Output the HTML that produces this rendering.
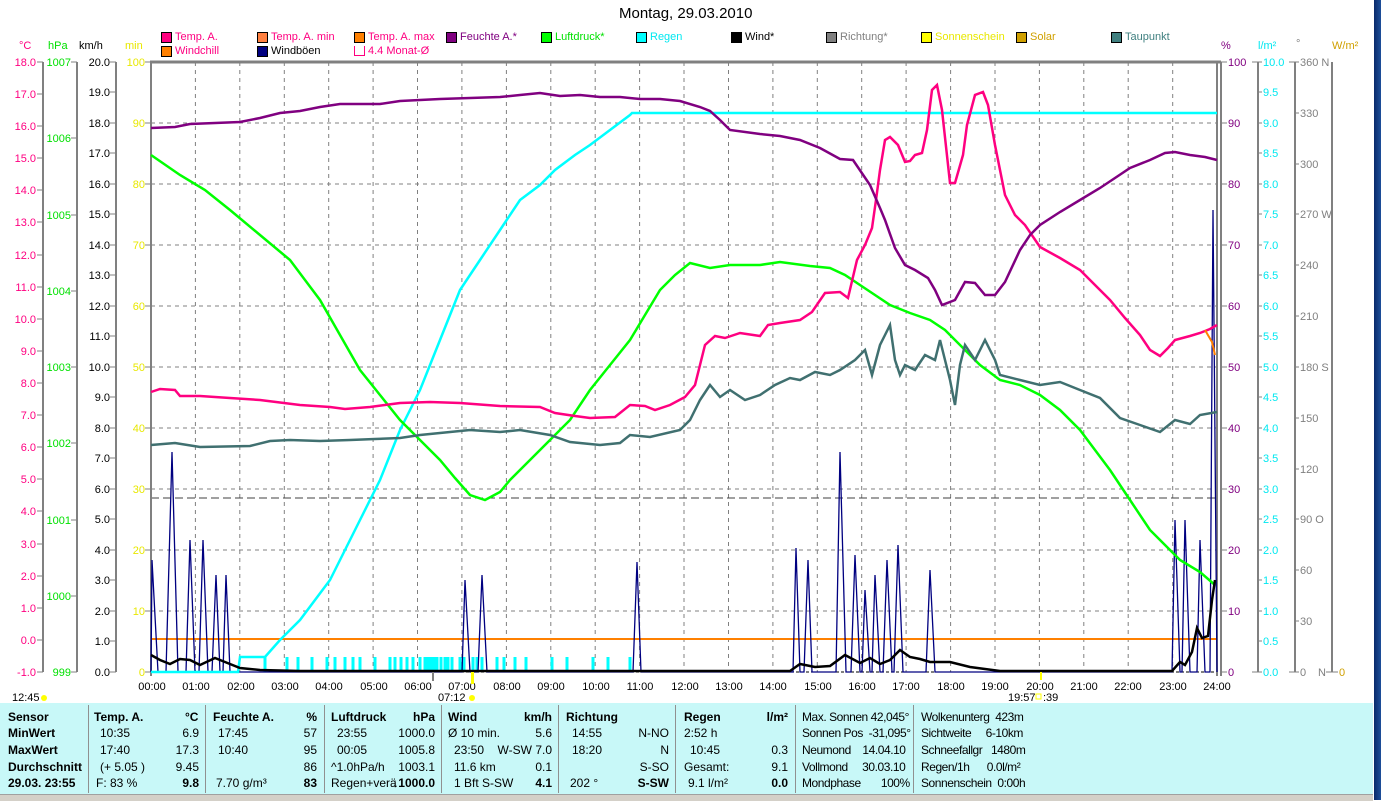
<!DOCTYPE html>
<html><head><meta charset="utf-8"><style>
html,body{margin:0;padding:0;}
body{width:1381px;height:800px;position:relative;overflow:hidden;background:#fff;font-family:"Liberation Sans",sans-serif;font-size:11px;}
.t{position:absolute;white-space:nowrap;}
.tb{position:absolute;white-space:nowrap;font-size:12px;color:#000;}
.n{letter-spacing:-0.45px;}
.b{font-weight:bold;}
.sq{position:absolute;width:9px;height:9px;border:1px solid #000;}
</style></head><body>
<div class="t" style="left:619px;top:5px;font-size:15px;">Montag, 29.03.2010</div>

<div class="sq" style="left:161px;top:32px;background:#ff0080"></div><div class="t" style="left:175px;top:31px;color:#ff0080">Temp. A.</div>
<div class="sq" style="left:257px;top:32px;background:#ff8040"></div><div class="t" style="left:271px;top:31px;color:#ff0080">Temp. A. min</div>
<div class="sq" style="left:354px;top:32px;background:#ff8000"></div><div class="t" style="left:368px;top:31px;color:#ff0080">Temp. A. max</div>
<div class="sq" style="left:446px;top:32px;background:#800080"></div><div class="t" style="left:460px;top:31px;color:#800080">Feuchte A.*</div>
<div class="sq" style="left:541px;top:32px;background:#00ff00"></div><div class="t" style="left:555px;top:31px;color:#00e000">Luftdruck*</div>
<div class="sq" style="left:636px;top:32px;background:#00ffff"></div><div class="t" style="left:650px;top:31px;color:#00e8f0">Regen</div>
<div class="sq" style="left:731px;top:32px;background:#000"></div><div class="t" style="left:745px;top:31px;color:#000">Wind*</div>
<div class="sq" style="left:826px;top:32px;background:#808080"></div><div class="t" style="left:840px;top:31px;color:#808080">Richtung*</div>
<div class="sq" style="left:921px;top:32px;background:#ffff00"></div><div class="t" style="left:935px;top:31px;color:#e8e800">Sonnenschein</div>
<div class="sq" style="left:1016px;top:32px;background:#d0a000"></div><div class="t" style="left:1030px;top:31px;color:#d0a000">Solar</div>
<div class="sq" style="left:1111px;top:32px;background:#408080"></div><div class="t" style="left:1125px;top:31px;color:#408080">Taupunkt</div>
<div class="sq" style="left:161px;top:46px;background:#ff8000"></div><div class="t" style="left:175px;top:45px;color:#ff0080">Windchill</div>
<div class="sq" style="left:257px;top:46px;background:#000080"></div><div class="t" style="left:271px;top:45px;color:#000">Windböen</div>
<div class="sq" style="left:354px;top:46px;border-color:#ff0080;border-top:none;height:9px;"></div><div class="t" style="left:368px;top:45px;color:#ff0080">4.4 Monat-Ø</div>

<div class="t" style="left:19px;top:40px;color:#ff0080">°C</div>
<div class="t" style="left:48px;top:40px;color:#00e000">hPa</div>
<div class="t" style="left:79px;top:40px;color:#000">km/h</div>
<div class="t" style="left:125px;top:40px;color:#e8e800">min</div>
<div class="t" style="left:1221px;top:40px;color:#800080">%</div>
<div class="t" style="left:1258px;top:40px;color:#00e8f0">l/m²</div>
<div class="t" style="left:1296px;top:38px;color:#808080">°</div>
<div class="t" style="left:1332px;top:40px;color:#d0a000">W/m²</div>

<svg style="position:absolute;left:0;top:0" width="1381" height="705" font-family="Liberation Sans, sans-serif" font-size="11">
<g stroke="#808080" stroke-width="2" fill="none">
<line x1="43" y1="62" x2="43" y2="672"/><line x1="77" y1="62" x2="77" y2="672"/><line x1="116" y1="62" x2="116" y2="672"/>
<line x1="1258" y1="62" x2="1258" y2="672"/><line x1="1295" y1="62" x2="1295" y2="672"/><line x1="1332" y1="62" x2="1332" y2="672"/>
</g>
<g stroke="#808080" stroke-width="1" stroke-dasharray="4,4">
<line x1="195.4" y1="62" x2="195.4" y2="672"/><line x1="239.8" y1="62" x2="239.8" y2="672"/><line x1="284.3" y1="62" x2="284.3" y2="672"/><line x1="328.7" y1="62" x2="328.7" y2="672"/><line x1="373.1" y1="62" x2="373.1" y2="672"/><line x1="417.5" y1="62" x2="417.5" y2="672"/><line x1="461.9" y1="62" x2="461.9" y2="672"/><line x1="506.4" y1="62" x2="506.4" y2="672"/><line x1="550.8" y1="62" x2="550.8" y2="672"/><line x1="595.2" y1="62" x2="595.2" y2="672"/><line x1="639.6" y1="62" x2="639.6" y2="672"/><line x1="684" y1="62" x2="684" y2="672"/><line x1="728.5" y1="62" x2="728.5" y2="672"/><line x1="772.9" y1="62" x2="772.9" y2="672"/><line x1="817.3" y1="62" x2="817.3" y2="672"/><line x1="861.7" y1="62" x2="861.7" y2="672"/><line x1="906.1" y1="62" x2="906.1" y2="672"/><line x1="950.6" y1="62" x2="950.6" y2="672"/><line x1="995" y1="62" x2="995" y2="672"/><line x1="1039.4" y1="62" x2="1039.4" y2="672"/><line x1="1083.8" y1="62" x2="1083.8" y2="672"/><line x1="1128.2" y1="62" x2="1128.2" y2="672"/><line x1="1172.7" y1="62" x2="1172.7" y2="672"/>
<line x1="151" y1="123" x2="1217" y2="123"/><line x1="151" y1="184" x2="1217" y2="184"/><line x1="151" y1="245" x2="1217" y2="245"/><line x1="151" y1="306" x2="1217" y2="306"/><line x1="151" y1="367" x2="1217" y2="367"/><line x1="151" y1="428" x2="1217" y2="428"/><line x1="151" y1="489" x2="1217" y2="489"/><line x1="151" y1="550" x2="1217" y2="550"/><line x1="151" y1="611" x2="1217" y2="611"/>
</g>
<line x1="151" y1="498" x2="1217" y2="498" stroke="#404040" stroke-dasharray="8,4"/>
<line x1="151" y1="672" x2="1217" y2="672" stroke="#000" stroke-dasharray="3,2"/>
<g stroke="#808080" fill="none">
<line x1="150" y1="62" x2="1221" y2="62" stroke-width="3"/>
<line x1="151" y1="62" x2="151" y2="676" stroke-width="2"/>
<line x1="1217" y1="62" x2="1217" y2="676" stroke-width="2"/>
<line x1="1221" y1="62" x2="1221" y2="676" stroke-width="2"/>
</g>
<g stroke="#808080" stroke-width="1">
<path d="M37 62H43M37 94H43M37 126H43M37 158H43M37 190H43M37 222H43M37 255H43M37 287H43M37 319H43M37 351H43M37 383H43M37 415H43M37 447H43M37 479H43M37 511H43M37 544H43M37 576H43M37 608H43M37 640H43M37 672H43"/>
<path d="M71 62H77M71 138H77M71 215H77M71 291H77M71 367H77M71 443H77M71 520H77M71 596H77M71 672H77"/>
<path d="M110 62H116M110 92H116M110 123H116M110 153H116M110 184H116M110 214H116M110 245H116M110 275H116M110 306H116M110 336H116M110 367H116M110 397H116M110 428H116M110 458H116M110 489H116M110 519H116M110 550H116M110 580H116M110 611H116M110 641H116M110 672H116"/>
<path d="M145 62H151M145 123H151M145 184H151M145 245H151M145 306H151M145 367H151M145 428H151M145 489H151M145 550H151M145 611H151M145 672H151"/>
<path d="M1221 62H1227M1221 123H1227M1221 184H1227M1221 245H1227M1221 306H1227M1221 367H1227M1221 428H1227M1221 489H1227M1221 550H1227M1221 611H1227M1221 672H1227"/>
<path d="M1252 62H1262M1258 92H1262M1258 123H1262M1258 153H1262M1258 184H1262M1258 214H1262M1258 245H1262M1258 275H1262M1258 306H1262M1258 336H1262M1258 367H1262M1258 397H1262M1258 428H1262M1258 458H1262M1258 489H1262M1258 519H1262M1258 550H1262M1258 580H1262M1258 611H1262M1258 641H1262M1252 672H1262"/>
<path d="M1289 62H1299M1295 113H1299M1295 164H1299M1295 214H1299M1295 265H1299M1295 316H1299M1295 367H1299M1295 418H1299M1295 469H1299M1295 519H1299M1295 570H1299M1295 621H1299M1289 672H1299"/>
<path d="M1326 672H1338"/>
</g>
<g fill="#ff0080" text-anchor="end">
<text x="36" y="66">18.0</text><text x="36" y="98">17.0</text><text x="36" y="130">16.0</text><text x="36" y="162">15.0</text><text x="36" y="194">14.0</text><text x="36" y="226">13.0</text><text x="36" y="259">12.0</text><text x="36" y="291">11.0</text><text x="36" y="323">10.0</text><text x="36" y="355">9.0</text><text x="36" y="387">8.0</text><text x="36" y="419">7.0</text><text x="36" y="451">6.0</text><text x="36" y="483">5.0</text><text x="36" y="515">4.0</text><text x="36" y="548">3.0</text><text x="36" y="580">2.0</text><text x="36" y="612">1.0</text><text x="36" y="644">0.0</text><text x="36" y="676">-1.0</text>
</g>
<g fill="#00e000" text-anchor="end">
<text x="71" y="66">1007</text><text x="71" y="142">1006</text><text x="71" y="219">1005</text><text x="71" y="295">1004</text><text x="71" y="371">1003</text><text x="71" y="447">1002</text><text x="71" y="524">1001</text><text x="71" y="600">1000</text><text x="71" y="676">999</text>
</g>
<g fill="#000" text-anchor="end">
<text x="110" y="66">20.0</text><text x="110" y="96">19.0</text><text x="110" y="127">18.0</text><text x="110" y="157">17.0</text><text x="110" y="188">16.0</text><text x="110" y="218">15.0</text><text x="110" y="249">14.0</text><text x="110" y="279">13.0</text><text x="110" y="310">12.0</text><text x="110" y="340">11.0</text><text x="110" y="371">10.0</text><text x="110" y="401">9.0</text><text x="110" y="432">8.0</text><text x="110" y="462">7.0</text><text x="110" y="493">6.0</text><text x="110" y="523">5.0</text><text x="110" y="554">4.0</text><text x="110" y="584">3.0</text><text x="110" y="615">2.0</text><text x="110" y="645">1.0</text><text x="110" y="676">0.0</text>
</g>
<g fill="#e8e800" text-anchor="end">
<text x="145" y="66">100</text><text x="145" y="127">90</text><text x="145" y="188">80</text><text x="145" y="249">70</text><text x="145" y="310">60</text><text x="145" y="371">50</text><text x="145" y="432">40</text><text x="145" y="493">30</text><text x="145" y="554">20</text><text x="145" y="615">10</text><text x="145" y="676">0</text>
</g>
<g fill="#800080">
<text x="1228" y="66">100</text><text x="1228" y="127">90</text><text x="1228" y="188">80</text><text x="1228" y="249">70</text><text x="1228" y="310">60</text><text x="1228" y="371">50</text><text x="1228" y="432">40</text><text x="1228" y="493">30</text><text x="1228" y="554">20</text><text x="1228" y="615">10</text><text x="1228" y="676">0</text>
</g>
<g fill="#00e8f0">
<text x="1263" y="66">10.0</text><text x="1263" y="96">9.5</text><text x="1263" y="127">9.0</text><text x="1263" y="157">8.5</text><text x="1263" y="188">8.0</text><text x="1263" y="218">7.5</text><text x="1263" y="249">7.0</text><text x="1263" y="279">6.5</text><text x="1263" y="310">6.0</text><text x="1263" y="340">5.5</text><text x="1263" y="371">5.0</text><text x="1263" y="401">4.5</text><text x="1263" y="432">4.0</text><text x="1263" y="462">3.5</text><text x="1263" y="493">3.0</text><text x="1263" y="523">2.5</text><text x="1263" y="554">2.0</text><text x="1263" y="584">1.5</text><text x="1263" y="615">1.0</text><text x="1263" y="645">0.5</text><text x="1263" y="676">0.0</text>
</g>
<g fill="#808080">
<text x="1300" y="66">360 N</text><text x="1300" y="117">330</text><text x="1300" y="168">300</text><text x="1300" y="218">270 W</text><text x="1300" y="269">240</text><text x="1300" y="320">210</text><text x="1300" y="371">180 S</text><text x="1300" y="422">150</text><text x="1300" y="473">120</text><text x="1300" y="523">90 O</text><text x="1300" y="574">60</text><text x="1300" y="625">30</text><text x="1300" y="676">0</text><text x="1318" y="676">N</text>
</g>
<text x="1339" y="676" fill="#d0a000">0</text>

<line x1="151" y1="639" x2="1217" y2="639" stroke="#ff8000" stroke-width="2"/>
<g stroke="#00ffff" stroke-width="3">
<path d="M265 657V672M287 657V672M298 657V672M312 657V672M327 657V672M335 657V672M345 657V672M353 657V672M360 657V672M375 657V672M390 657V672M395 657V672M401 657V672M407 657V672M413 657V672M420 657V672M425 657V672M428 657V672M431 657V672M434 657V672M437 657V672M441 657V672M445 657V672M448 657V672M452 657V672M460 657V672M464 657V672M473 657V672M477 657V672M482 657V672M497 657V672M504 657V672M515 657V672M526 657V672M552 657V672M567 657V672M593 657V672M608 657V672M630 657V672"/>
</g>
<polyline fill="none" stroke="#000080" stroke-width="1.3" points="151,672 152,560 158,672 166,672 172,452 178,672 186,672 190,540 195,672 199,672 203,540 208,672 212,672 216,575 220,672 223,672 226,575 230,672 462,672 465,580 470,672 478,672 482,575 487,672 633,672 637,562 641,672 793,672 796,548 800,672 804,672 808,560 812,672 836,672 840,452 846,672 851,672 855,555 860,672 862,672 865,590 870,672 872,672 875,575 880,672 883,672 887,560 892,672 894,672 898,545 903,672 926,672 930,570 935,672 1172,672 1175,520 1180,672 1182,672 1185,520 1190,672 1197,672 1200,540 1205,672 1210,672 1213,210 1217,672"/>
<polyline fill="none" stroke="#00ffff" stroke-width="2.5" points="151,672 238,672 240,657 265,657 280,640 300,620 330,580 350,540 360,520 380,480 400,430 420,390 440,340 460,290 480,260 500,230 520,200 540,185 555,170 575,155 590,145 610,130 630,115 632,113 1217,113"/>
<polyline fill="none" stroke="#00ff00" stroke-width="2.5" points="151,155 180,175 205,190 230,210 260,235 290,260 305,280 320,300 340,335 360,370 380,395 400,420 420,440 440,460 455,478 470,495 485,500 500,492 510,480 530,460 550,440 570,420 590,390 610,365 630,340 645,315 660,290 675,275 690,263 710,268 730,265 760,265 780,262 810,266 830,268 845,275 860,285 875,295 890,305 910,313 930,320 945,330 960,345 980,365 1000,380 1020,385 1040,395 1060,410 1080,430 1095,450 1110,470 1130,500 1150,530 1165,545 1180,560 1200,572 1215,585"/>
<polyline fill="none" stroke="#407070" stroke-width="2.5" points="151,445 175,443 200,447 250,446 270,441 290,440 320,441 350,440 375,439 400,438 420,435 450,432 470,430 500,432 520,430 550,435 570,442 600,445 620,443 630,435 650,437 680,430 690,420 700,400 710,385 720,397 730,390 745,400 760,395 775,385 790,378 800,380 815,372 830,375 840,370 855,360 865,350 872,375 880,345 885,335 890,325 895,360 900,375 905,365 915,370 925,355 935,360 940,340 950,380 955,405 960,365 965,345 975,360 985,340 995,360 1000,375 1020,380 1040,385 1060,382 1080,390 1100,398 1120,418 1140,425 1160,432 1175,420 1190,424 1200,415 1217,412"/>
<polyline fill="none" stroke="#ff0080" stroke-width="2.5" points="151,392 160,389 175,390 180,396 200,396 230,398 260,400 300,405 330,407 345,409 370,407 400,403 430,402 460,403 500,406 540,407 555,413 575,416 590,418 615,417 630,405 645,406 655,410 670,405 685,397 695,385 705,345 715,336 725,338 740,333 760,336 768,325 780,323 800,320 812,312 825,293 840,292 848,298 857,260 865,245 872,228 876,200 880,170 885,140 890,137 898,145 905,162 910,161 915,155 922,153 927,130 932,90 937,85 942,110 950,183 955,183 963,155 967,125 975,95 983,92 988,105 995,145 1005,195 1015,215 1025,225 1040,247 1060,258 1080,270 1095,285 1110,300 1125,318 1140,335 1150,350 1160,356 1168,348 1175,340 1190,336 1200,333 1210,329 1217,325"/>
<polyline fill="none" stroke="#ff8000" stroke-width="2" points="1205,330 1212,342 1215,355"/>
<polyline fill="none" stroke="#800080" stroke-width="2.5" points="151,128 175,127 190,124 240,122 260,118 280,113 300,111 320,107 340,104 380,104 400,101 420,100 440,99 470,98 500,97 520,95 540,93 560,96 580,95 600,97 620,97 640,99 660,99 680,101 700,107 710,111 720,120 730,130 760,134 780,136 800,140 820,148 840,159 853,160 870,185 880,208 885,220 895,248 905,265 915,270 928,278 935,290 942,305 955,300 965,282 975,283 985,295 995,295 1005,282 1020,250 1030,235 1040,225 1060,212 1080,200 1100,188 1115,178 1130,168 1150,160 1165,153 1175,152 1190,155 1205,157 1217,160"/>
<polyline fill="none" stroke="#000" stroke-width="2.5" points="151,655 160,660 170,664 180,659 190,660 200,665 215,658 225,662 240,668 260,670 300,671 790,671 800,664 815,667 830,666 845,655 860,663 870,658 880,664 890,660 900,650 910,657 920,659 930,662 950,662 970,667 1000,671 1172,671 1180,662 1185,665 1192,652 1197,628 1202,638 1208,636 1212,600 1215,580"/>

<g fill="#000" text-anchor="middle">
<text x="152" y="690">00:00</text><text x="196" y="690">01:00</text><text x="241" y="690">02:00</text><text x="285" y="690">03:00</text><text x="329" y="690">04:00</text><text x="374" y="690">05:00</text><text x="418" y="690">06:00</text><text x="462" y="690">07:00</text><text x="507" y="690">08:00</text><text x="551" y="690">09:00</text><text x="596" y="690">10:00</text><text x="640" y="690">11:00</text><text x="685" y="690">12:00</text><text x="729" y="690">13:00</text><text x="773" y="690">14:00</text><text x="818" y="690">15:00</text><text x="862" y="690">16:00</text><text x="906" y="690">17:00</text><text x="951" y="690">18:00</text><text x="995" y="690">19:00</text><text x="1040" y="690">20:00</text><text x="1084" y="690">21:00</text><text x="1128" y="690">22:00</text><text x="1173" y="690">23:00</text><text x="1217" y="690">24:00</text>
</g>
<text x="12" y="701" fill="#000">12:45</text><circle cx="44" cy="698" r="3" fill="#ffff00"/>
<text x="438" y="701" fill="#000">07:12</text><circle cx="472" cy="698" r="3" fill="#ffff00"/>
<rect x="471" y="672" width="3" height="12" fill="#ffff00"/>
<rect x="432" y="672" width="2" height="9" fill="#808080"/>
<text x="1008" y="701" fill="#000">19:57</text><rect x="1036" y="694" width="5" height="5" fill="none" stroke="#ffff00"/><text x="1043" y="701" fill="#000">:39</text>
<rect x="1040" y="672" width="2" height="8" fill="#ffff00"/>
</svg>

<div style="position:absolute;left:1374px;top:0;width:7px;height:800px;background:linear-gradient(90deg,#0a2a6a,#1d4f9a)"></div>

<div style="position:absolute;left:0;top:703px;width:1373px;height:91px;background:#c8f8f8;"></div>
<div style="position:absolute;left:0;top:794px;width:1373px;height:6px;background:#d4d0c8;border-top:1px solid #a0a0a0"></div>
<div style="position:absolute;left:88px;top:705px;width:1px;height:88px;background:#909090"></div>
<div style="position:absolute;left:205px;top:705px;width:1px;height:88px;background:#909090"></div>
<div style="position:absolute;left:324px;top:705px;width:1px;height:88px;background:#909090"></div>
<div style="position:absolute;left:441px;top:705px;width:1px;height:88px;background:#909090"></div>
<div style="position:absolute;left:558px;top:705px;width:1px;height:88px;background:#909090"></div>
<div style="position:absolute;left:675px;top:705px;width:1px;height:88px;background:#909090"></div>
<div style="position:absolute;left:795px;top:705px;width:1px;height:88px;background:#909090"></div>
<div style="position:absolute;left:913px;top:705px;width:1px;height:88px;background:#909090"></div>

<div class="tb b" style="left:8px;top:710px">Sensor</div>
<div class="tb b" style="left:8px;top:726px">MinWert</div>
<div class="tb b" style="left:8px;top:743px">MaxWert</div>
<div class="tb b" style="left:8px;top:760px">Durchschnitt</div>
<div class="tb b" style="left:8px;top:776px">29.03. 23:55</div>

<div class="tb b" style="left:94px;top:710px">Temp. A.</div><div class="tb b" style="left:185px;top:710px">°C</div>
<div class="tb" style="left:100px;top:726px">10:35</div><div class="tb" style="right:1182px;top:726px">6.9</div>
<div class="tb" style="left:100px;top:743px">17:40</div><div class="tb" style="right:1182px;top:743px">17.3</div>
<div class="tb" style="left:100px;top:760px">(+ 5.05 )</div><div class="tb" style="right:1182px;top:760px">9.45</div>
<div class="tb" style="left:96px;top:776px">F: 83 %</div><div class="tb b" style="right:1182px;top:776px">9.8</div>

<div class="tb b" style="left:213px;top:710px">Feuchte A.</div><div class="tb b" style="right:1064px;top:710px">%</div>
<div class="tb" style="left:218px;top:726px">17:45</div><div class="tb" style="right:1064px;top:726px">57</div>
<div class="tb" style="left:218px;top:743px">10:40</div><div class="tb" style="right:1064px;top:743px">95</div>
<div class="tb" style="right:1064px;top:760px">86</div>
<div class="tb" style="left:216px;top:776px">7.70 g/m³</div><div class="tb b" style="right:1064px;top:776px">83</div>

<div class="tb b" style="left:331px;top:710px">Luftdruck</div><div class="tb b" style="right:946px;top:710px">hPa</div>
<div class="tb" style="left:337px;top:726px">23:55</div><div class="tb" style="right:946px;top:726px">1000.0</div>
<div class="tb" style="left:337px;top:743px">00:05</div><div class="tb" style="right:946px;top:743px">1005.8</div>
<div class="tb" style="left:331px;top:760px">^1.0hPa/h</div><div class="tb" style="right:946px;top:760px">1003.1</div>
<div class="tb" style="left:331px;top:776px">Regen+verä</div><div class="tb b" style="right:946px;top:776px">↓1000.0</div>

<div class="tb b" style="left:448px;top:710px">Wind</div><div class="tb b" style="right:829px;top:710px">km/h</div>
<div class="tb" style="left:448px;top:726px">Ø 10 min.</div><div class="tb" style="right:829px;top:726px">5.6</div>
<div class="tb" style="left:454px;top:743px">23:50</div><div class="tb" style="right:829px;top:743px">W-SW 7.0</div>
<div class="tb" style="left:454px;top:760px">11.6 km</div><div class="tb" style="right:829px;top:760px">0.1</div>
<div class="tb" style="left:454px;top:776px">1 Bft S-SW</div><div class="tb b" style="right:829px;top:776px">4.1</div>

<div class="tb b" style="left:566px;top:710px">Richtung</div>
<div class="tb" style="left:572px;top:726px">14:55</div><div class="tb" style="right:712px;top:726px">N-NO</div>
<div class="tb" style="left:572px;top:743px">18:20</div><div class="tb" style="right:712px;top:743px">N</div>
<div class="tb" style="right:712px;top:760px">S-SO</div>
<div class="tb" style="left:570px;top:776px">202 °</div><div class="tb b" style="right:712px;top:776px">S-SW</div>

<div class="tb b" style="left:684px;top:710px">Regen</div><div class="tb b" style="right:593px;top:710px">l/m²</div>
<div class="tb" style="left:684px;top:726px">2:52 h</div>
<div class="tb" style="left:690px;top:743px">10:45</div><div class="tb" style="right:593px;top:743px">0.3</div>
<div class="tb" style="left:684px;top:760px">Gesamt:</div><div class="tb" style="right:593px;top:760px">9.1</div>
<div class="tb" style="left:688px;top:776px">9.1 l/m²</div><div class="tb b" style="right:593px;top:776px">0.0</div>

<div class="tb n" style="left:802px;top:710px">Max. Sonnen 42,045°</div>
<div class="tb n" style="left:802px;top:726px">Sonnen Pos&nbsp; -31,095°</div>
<div class="tb n" style="left:802px;top:743px">Neumond&nbsp;&nbsp;&nbsp; 14.04.10</div>
<div class="tb n" style="left:802px;top:760px">Vollmond&nbsp;&nbsp;&nbsp;&nbsp; 30.03.10</div>
<div class="tb n" style="left:802px;top:776px">Mondphase&nbsp;&nbsp;&nbsp;&nbsp;&nbsp;&nbsp; 100%</div>

<div class="tb n" style="left:921px;top:710px">Wolkenunterg&nbsp; 423m</div>
<div class="tb n" style="left:921px;top:726px">Sichtweite&nbsp;&nbsp;&nbsp;&nbsp; 6-10km</div>
<div class="tb n" style="left:921px;top:743px">Schneefallgr&nbsp;&nbsp; 1480m</div>
<div class="tb n" style="left:921px;top:760px">Regen/1h&nbsp;&nbsp;&nbsp;&nbsp;&nbsp; 0.0l/m²</div>
<div class="tb n" style="left:921px;top:776px">Sonnenschein&nbsp; 0:00h</div>
</body></html>
